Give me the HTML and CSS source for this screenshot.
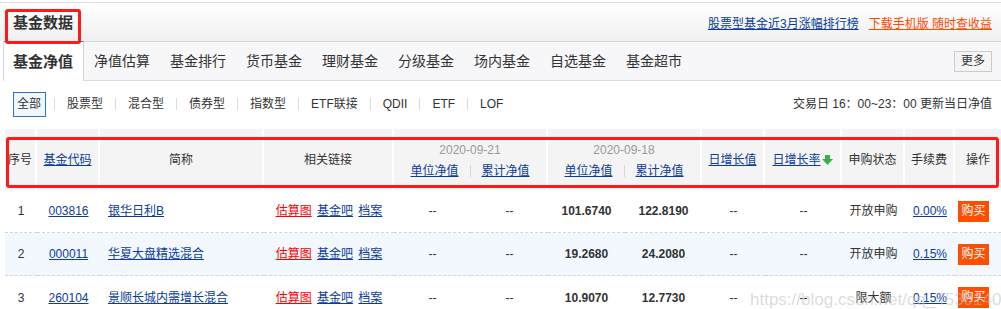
FILE: index.html
```html
<!DOCTYPE html>
<html lang="zh-CN">
<head>
<meta charset="utf-8">
<title>基金数据</title>
<link rel="stylesheet" href="styles.css">
</head>
<body>
<div class="page">
  <div class="topbar">
    <div class="title">基金数据</div>
    <div class="toplinks">
      <a class="lnk-blue" href="#">股票型基金近3月涨幅排行榜</a>
      <a class="lnk-orange" href="#">下载手机版 随时查收益</a>
    </div>
  </div>

  <div class="tabs">
    <a class="tab active" href="#">基金净值</a>
    <a class="tab" href="#">净值估算</a>
    <a class="tab" href="#">基金排行</a>
    <a class="tab" href="#">货币基金</a>
    <a class="tab" href="#">理财基金</a>
    <a class="tab" href="#">分级基金</a>
    <a class="tab" href="#">场内基金</a>
    <a class="tab" href="#">自选基金</a>
    <a class="tab" href="#">基金超市</a>
    <span class="more">更多</span>
  </div>

  <div class="filters">
    <div class="ftypes">
      <span class="ft current">全部</span><i class="sep"></i>
      <span class="ft">股票型</span><i class="sep"></i>
      <span class="ft">混合型</span><i class="sep"></i>
      <span class="ft">债券型</span><i class="sep"></i>
      <span class="ft">指数型</span><i class="sep"></i>
      <span class="ft">ETF联接</span><i class="sep"></i>
      <span class="ft">QDII</span><i class="sep"></i>
      <span class="ft">ETF</span><i class="sep"></i>
      <span class="ft">LOF</span>
    </div>
    <div class="note">交易日 16：00~23：00 更新当日净值</div>
  </div>

  <table class="grid">
    <colgroup>
      <col class="c-no"><col class="c-code"><col class="c-name"><col class="c-links">
      <col class="c-val"><col class="c-val"><col class="c-val"><col class="c-val">
      <col class="c-inc"><col class="c-rate"><col class="c-state"><col class="c-fee"><col class="c-op">
    </colgroup>
    <thead>
      <tr>
        <th>序号</th>
        <th><a class="hl" href="#">基金代码</a></th>
        <th>简称</th>
        <th>相关链接</th>
        <th colspan="2"><div class="date">2020-09-21</div><div class="sub"><a class="hl" href="#">单位净值</a><i class="sep"></i><a class="hl" href="#">累计净值</a></div></th>
        <th colspan="2"><div class="date">2020-09-18</div><div class="sub"><a class="hl" href="#">单位净值</a><i class="sep"></i><a class="hl" href="#">累计净值</a></div></th>
        <th><a class="hl" href="#">日增长值</a></th>
        <th><a class="hl" href="#">日增长率</a><svg class="arrow" width="11" height="10" viewBox="0 0 11 10"><path d="M3 0h5v4h3L5.5 10 0 4h3z" fill="#3dae4c"/></svg></th>
        <th>申购状态</th>
        <th>手续费</th>
        <th class="last">操作</th>
      </tr>
    </thead>
    <tbody>
      <tr>
        <td>1</td>
        <td><a class="bl" href="#">003816</a></td>
        <td class="name"><a class="bl" href="#">银华日利B</a></td>
        <td class="links"><a class="rd" href="#">估算图</a> <a class="bl" href="#">基金吧</a> <a class="bl" href="#">档案</a></td>
        <td>--</td><td>--</td>
        <td class="num">101.6740</td><td class="num">122.8190</td>
        <td>--</td><td>--</td>
        <td>开放申购</td>
        <td><a class="bl" href="#">0.00%</a></td>
        <td class="op"><span class="buy">购买</span></td>
      </tr>
      <tr class="alt">
        <td>2</td>
        <td><a class="bl" href="#">000011</a></td>
        <td class="name"><a class="bl" href="#">华夏大盘精选混合</a></td>
        <td class="links"><a class="rd" href="#">估算图</a> <a class="bl" href="#">基金吧</a> <a class="bl" href="#">档案</a></td>
        <td>--</td><td>--</td>
        <td class="num">19.2680</td><td class="num">24.2080</td>
        <td>--</td><td>--</td>
        <td>开放申购</td>
        <td><a class="bl" href="#">0.15%</a></td>
        <td class="op"><span class="buy">购买</span></td>
      </tr>
      <tr>
        <td>3</td>
        <td><a class="bl" href="#">260104</a></td>
        <td class="name"><a class="bl" href="#">景顺长城内需增长混合</a></td>
        <td class="links"><a class="rd" href="#">估算图</a> <a class="bl" href="#">基金吧</a> <a class="bl" href="#">档案</a></td>
        <td>--</td><td>--</td>
        <td class="num">10.9070</td><td class="num">12.7730</td>
        <td>--</td><td>--</td>
        <td>限大额</td>
        <td><a class="bl" href="#">0.15%</a></td>
        <td class="op"><span class="buy">购买</span></td>
      </tr>
    </tbody>
  </table>

  <div class="mark mark-title"></div>
  <div class="mark mark-head"></div>
  <div class="watermark">https://blog.csdn.net/qq_45301401</div>
</div>
</body>
</html>
```

FILE: styles.css
```css
* { box-sizing: border-box; }
html, body { margin: 0; padding: 0; background: #fff; }
body {
  font-family: "Liberation Sans", "Noto Sans CJK SC", sans-serif;
  font-size: 12px;
  color: #333;
  overflow: hidden;
}
a { text-decoration: none; color: inherit; }

.page {
  position: relative;
  width: 1001px;
  height: 309px;
  padding-top: 2px;
}

/* top bar */
.topbar {
  height: 39px;
  border-top: 1px solid #dcdcdc;
  background: linear-gradient(#ffffff, #f0f0f0);
  display: flex;
  align-items: center;
  justify-content: space-between;
  padding: 0 9px 0 13px;
}
.title {
  font-size: 15px;
  font-weight: bold;
  color: #333;
  line-height: 20px;
  padding-top: 2px;
}
.toplinks {
  display: flex;
  gap: 10px;
  font-size: 12px;
  line-height: 16px;
  padding-top: 4px;
}
.lnk-blue { color: #0a3c9c; text-decoration: underline; }
.lnk-orange { color: #ff4a00; text-decoration: underline; }

/* tabs */
.tabs {
  height: 40px;
  border-top: 1px solid #d6d6d6;
  border-bottom: 1px solid #dcdcdc;
  border-left: 1px solid #d6d6d6;
  margin-left: 3px;
  background: #f7f7f9;
  display: flex;
  align-items: stretch;
  padding-right: 9px;
}
.tab {
  display: flex;
  align-items: center;
  padding: 0 10px;
  font-size: 14px;
  color: #333;
  line-height: 20px;
}
.tab.active {
  margin-top: -1px;
  margin-bottom: -1px;
  border-top: 1px solid #3a78c8;
  border-right: 1px solid #d6d6d6;
  background: #fff;
  font-size: 15px;
  font-weight: bold;
  padding: 0 10px 0 9px;
}
.more {
  margin-left: auto;
  align-self: center;
  height: 21px;
  width: 38px;
  border: 1px solid #ccc;
  background: #f4f4f4;
  font-size: 12px;
  line-height: 19px;
  text-align: center;
}

/* filters */
.filters {
  height: 48px;
  display: flex;
  align-items: center;
  justify-content: space-between;
  padding: 0 9px 2px 13px;
}
.ftypes { display: flex; align-items: center; }
.ft {
  padding: 0 4px;
  font-size: 12px;
  line-height: 23px;
  color: #333;
  white-space: nowrap;
}
.ft.current {
  border: 1px solid #2f73c4;
  background: #f0f7ff;
  height: 25px;
  padding: 0 4px 0 3px;
  text-align: center;
}
.sep {
  display: inline-block;
  width: 1px;
  height: 12px;
  background: #dcdcdc;
  margin: 0 8px;
}
.note { font-size: 12px; line-height: 16px; color: #333; }

/* table */
.grid {
  margin-left: 5px;
  width: 996px;
  table-layout: fixed;
  border-collapse: separate;
  border-spacing: 0;
}
.c-no { width: 32px; }
.c-code { width: 63px; }
.c-name { width: 164px; }
.c-links { width: 130px; }
.c-val { width: 77px; }
.c-inc { width: 63px; }
.c-rate { width: 77px; }
.c-state { width: 63px; }
.c-fee { width: 50px; }
.c-op { width: 46px; }

.grid th {
  height: 61px;
  background: #f4f4f4;
  border-right: 2px solid #fff;
  font-weight: normal;
  font-size: 12px;
  line-height: 16px;
  color: #333;
  text-align: center;
  padding: 0;
  white-space: nowrap;
}
.grid th.last { border-right: 0; }
.hl { color: #0a3c9c; text-decoration: underline; }
.date { color: #999; line-height: 16px; margin-bottom: 5px; margin-top: 2px; }
.sub { display: flex; justify-content: center; align-items: center; }
.sub .sep { margin: 0 11px; background: #d8d8d8; }
.arrow { vertical-align: -1px; margin-left: 1px; }

.grid td {
  height: 43px;
  padding: 0;
  text-align: center;
  font-size: 12px;
  line-height: 16px;
  color: #333;
  white-space: nowrap;
  border-bottom: 1px dashed #d4d4d4;
}
.grid tbody tr:last-child td { border-bottom: 0; }
.grid tr.alt td { background: #f2f8fe; }
.grid td.name { text-align: left; padding-left: 8px; }
.grid td.num { font-weight: bold; }
.grid td.op { text-align: left; padding-left: 3px; }
.bl { color: #0a3c9c; text-decoration: underline; }
.rd { color: #f00; text-decoration: underline; }
.links a { margin: 0 1px; }
.buy {
  display: inline-block;
  width: 31px;
  height: 21px;
  line-height: 21px;
  background: #ff4e00;
  color: #fff;
  text-align: center;
  font-size: 12px;
}

/* annotation overlays */
.mark {
  position: absolute;
  border: 3px solid #fe1a1a;
  border-radius: 3px;
  pointer-events: none;
}
.mark-title { left: 5px; top: 9px; width: 76px; height: 35px; }
.mark-head { left: 6px; top: 137px; width: 993px; height: 51px; }

.watermark {
  position: absolute;
  left: 750px;
  top: 289px;
  font-size: 17px;
  line-height: 22px;
  color: rgba(190, 190, 190, 0.55);
  white-space: nowrap;
}
```
